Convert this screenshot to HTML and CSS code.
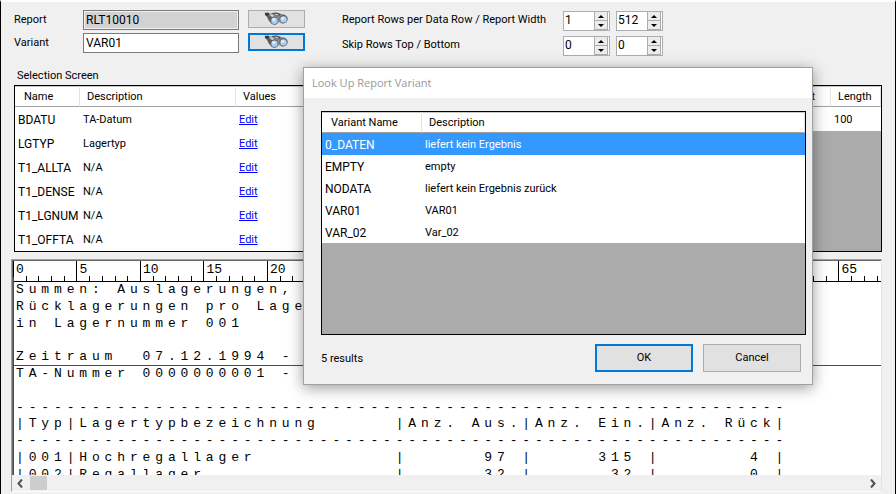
FILE: index.html
```html
<!DOCTYPE html>
<html lang="en">
<head>
<meta charset="utf-8">
<title>Report Variant</title>
<link rel="stylesheet" href="styles.css">
</head>
<body>
<svg class="defs" width="0" height="0" aria-hidden="true">
  <symbol id="binoculars" viewBox="0 0 25 14">
    <path d="M1 1.200 4 .5l2 1 3-.8 4 .3 4 1 3 .2 3.500 3.800-1 4-4 2-4-2-3 2.400-4-.4L5 9z" fill="#969696"/>
    <path d="M.8 .8 4.500 .8 5.500 2.500 3 4.500 1 3z" fill="#3b3b3b"/>
    <path d="M3 4.500 5.500 3 9 6 7 10.500 5 8.500z" fill="#5b5b5b"/>
    <path d="M5.500 2.200 9 3 11 5.500 8.500 5.500z" fill="#dcdcdc"/>
    <path d="M8 1 12.500 .6 17 2 15 4.500 11 3.500z" fill="#4c4c4c"/>
    <path d="M10 1.800 14 2 15 3.600 11.500 3.200z" fill="#c4c4c4"/>
    <circle cx="10.500" cy="8.500" r="4.200" fill="#666"/>
    <circle cx="10.500" cy="8.700" r="3.200" fill="#a9cdf5"/>
    <circle cx="9.700" cy="7.700" r="1.400" fill="#e6f2ff"/>
    <circle cx="19.500" cy="7" r="4.200" fill="#666"/>
    <circle cx="19.500" cy="7.400" r="3.200" fill="#a9cdf5"/>
    <circle cx="18.700" cy="6.400" r="1.400" fill="#e6f2ff"/>
  </symbol>
</svg>

<main class="window">
  <form class="settings">
    <div class="fields">
      <label for="report">Report</label>
      <input class="field" id="report" value="RLT10010" readonly>
      <button type="button" class="lookup" aria-label="Look up report"><svg width="25" height="14"><use href="#binoculars"/></svg></button>
      <label for="variant">Variant</label>
      <input class="field" id="variant" value="VAR01">
      <button type="button" class="lookup active" aria-label="Look up variant"><svg width="25" height="14"><use href="#binoculars"/></svg></button>
    </div>
    <div class="numbers">
      <label for="rows">Report Rows per Data Row / Report Width</label>
      <div class="spin"><input id="rows" value="1"><span class="arrows"><button type="button" class="up" aria-label="Increase"></button><button type="button" class="down" aria-label="Decrease"></button></span></div>
      <div class="spin"><input aria-label="Report Width" value="512"><span class="arrows"><button type="button" class="up" aria-label="Increase"></button><button type="button" class="down" aria-label="Decrease"></button></span></div>
      <label for="skip">Skip Rows Top / Bottom</label>
      <div class="spin"><input id="skip" value="0"><span class="arrows"><button type="button" class="up" aria-label="Increase"></button><button type="button" class="down" aria-label="Decrease"></button></span></div>
      <div class="spin"><input aria-label="Skip Rows Bottom" value="0"><span class="arrows"><button type="button" class="up" aria-label="Increase"></button><button type="button" class="down" aria-label="Decrease"></button></span></div>
    </div>
  </form>

  <h2 class="caption">Selection Screen</h2>
  <div class="grids">
    <div class="grid">
      <table class="selection">
        <colgroup><col class="c-name"><col class="c-desc"><col></colgroup>
        <thead><tr><th>Name</th><th>Description</th><th>Values</th></tr></thead>
        <tbody>
          <tr><td>BDATU</td><td>TA-Datum</td><td><a href="#">Edit</a></td></tr>
          <tr><td>LGTYP</td><td>Lagertyp</td><td><a href="#">Edit</a></td></tr>
          <tr><td>T1_ALLTA</td><td>N/A</td><td><a href="#">Edit</a></td></tr>
          <tr><td>T1_DENSE</td><td>N/A</td><td><a href="#">Edit</a></td></tr>
          <tr><td>T1_LGNUM</td><td>N/A</td><td><a href="#">Edit</a></td></tr>
          <tr><td>T1_OFFTA</td><td>N/A</td><td><a href="#">Edit</a></td></tr>
        </tbody>
      </table>
    </div>
    <div class="grid">
      <table class="columns">
        <colgroup><col><col class="c-length"></colgroup>
        <thead><tr><th class="end">Offset</th><th>Length</th></tr></thead>
        <tbody><tr><td></td><td>100</td></tr></tbody>
      </table>
    </div>
  </div>

  <section class="preview">
    <div class="page">
      <div class="ruler" id="ruler"></div>
      <div class="lines" id="lines"></div>
    </div>
    <div class="scrollbar">
      <svg width="8" height="9" viewBox="0 0 8 9"><path d="M6 .5 2.500 4.500 6 8.500" fill="none" stroke="#505050" stroke-width="2"/></svg>
      <span class="thumb"></span>
      <svg width="8" height="9" viewBox="0 0 8 9"><path d="M2 .5 5.500 4.500 2 8.500" fill="none" stroke="#505050" stroke-width="2"/></svg>
    </div>
  </section>

  <div class="dialog" role="dialog" aria-labelledby="dialog-title">
    <h1 id="dialog-title">Look Up Report Variant</h1>
    <div class="dialog-body">
      <div class="grid results">
        <table>
          <colgroup><col class="c-variant"><col></colgroup>
          <thead><tr><th>Variant Name</th><th>Description</th></tr></thead>
          <tbody>
            <tr class="selected"><td>0_DATEN</td><td>liefert kein Ergebnis</td></tr>
            <tr><td>EMPTY</td><td>empty</td></tr>
            <tr><td>NODATA</td><td>liefert kein Ergebnis zurück</td></tr>
            <tr><td>VAR01</td><td>VAR01</td></tr>
            <tr><td>VAR_02</td><td>Var_02</td></tr>
          </tbody>
        </table>
      </div>
      <div class="actions">
        <span class="count">5 results</span>
        <button type="button" class="action active">OK</button>
        <button type="button" class="action">Cancel</button>
      </div>
    </div>
  </div>
</main>
<script src="report.js"></script>
</body>
</html>
```
FILE: styles.css
```css
* { box-sizing: border-box; }

body {
  margin: 0;
  background: #f0f0f0;
  color: #000;
  font: 11px/16px Roboto, "Liberation Sans", sans-serif;
}

input, button { font: inherit; color: inherit; margin: 0; }
input { font-size: 12px; }
.defs { position: absolute; }

.window {
  position: relative;
  display: flex;
  flex-direction: column;
  height: 100vh;
  padding: 8px 13px 2px 10px;
  border: solid #000;
  border-width: 0 1px;
  border-top: 2px solid #fff;
  overflow: hidden;
}

.settings { display: flex; gap: 37px; padding-left: 3px; }

.fields {
  display: grid;
  grid-template-columns: 60px 156px 57px;
  column-gap: 9px;
  row-gap: 3px;
  align-content: start;
}

.fields label { line-height: 20px; }

.field {
  height: 20px;
  width: 100%;
  padding: 0 2px;
  border: 1px solid #7a7a7a;
  border-radius: 0;
  background: #fff;
}

.field:read-only { background: #d2d2d2; box-shadow: inset 0 0 0 1px #f0f0f0; }

.lookup {
  display: flex;
  justify-content: center;
  align-items: center;
  height: 18px;
  padding: 0;
  border: 1px solid #adadad;
  background: #e1e1e1;
}

.active { border: 2px solid #0078d7; }

.numbers {
  display: grid;
  grid-template-columns: 215px 47px 47px;
  column-gap: 6px;
  row-gap: 5px;
  padding-top: 1px;
}

.numbers label { line-height: 18px; white-space: nowrap; }

.spin {
  display: flex;
  height: 20px;
  border: 1px solid #abadb3;
  background: #fff;
}

.spin input {
  flex: 1;
  min-width: 0;
  padding: 0 1px 2px;
  border: 0;
  background: none;
}

.arrows { display: flex; flex-direction: column; width: 15px; padding-right: 1px; }

.arrows button {
  display: flex;
  flex: 1;
  align-items: center;
  justify-content: center;
  padding: 0;
  border: 1px solid #acacac;
  border-width: 0 1px 1px;
  background: #ececec;
}

.arrows button::before { content: ""; border: 3px solid transparent; }
.arrows .up::before { border-bottom-color: #000; border-top: 0; }
.arrows .down::before { border-top-color: #000; border-bottom: 0; }

.caption { margin: 12px 0 1px 6px; font-size: 11px; font-weight: 400; line-height: 16px; }

.grids { display: flex; gap: 10px; padding-left: 3px; }
.grids .grid { flex: 1; }

.grid { border: 1px solid #000; background: #ababab; }

table { width: 100%; border-collapse: separate; border-spacing: 0; table-layout: fixed; background: #fff; }

th {
  height: 21px;
  padding: 2px 7px 0;
  border-right: 1px solid #e5e5e5;
  border-bottom: 1px solid #a0a0a0;
  box-shadow: inset 0 1px #c8c8c8;
  font-weight: 400;
  line-height: 16px;
  text-align: left;
}

th:first-child { padding-left: 9px; }
th.end { text-align: right; padding-right: 15px; }
td { height: 24px; padding: 2px 3px 0; white-space: nowrap; }
td:first-child { font-size: 12px; }
a { color: #00f; }

.c-name { width: 65px; }
.c-desc { width: 156px; }
.c-length { width: 50px; }
.c-variant { width: 100px; }

.preview {
  display: flex;
  flex: 1;
  flex-direction: column;
  min-height: 0;
  margin-top: 7px;
  border: 1px solid #a0a0a0;
  border-right-color: #e3e3e3;
  border-bottom-color: #fff;
  background: #fff;
}

.page {
  position: relative;
  flex: 1;
  min-height: 0;
  overflow: hidden;
  border-top: 1px solid #696969;
  border-left: 1px solid #696969;
  font: 13px/16px "Liberation Mono", monospace;
}

.page::after {
  content: "";
  position: absolute;
  inset: 16px 0 0 0;
  border-left: 1px solid #f00;
}

.page::before {
  content: "";
  position: absolute;
  inset: 104px 0 auto;
  border-top: 1px solid #f00;
}

.ruler, .lines { display: grid; width: 889px; }

.ruler {
  grid-template-columns: repeat(70, 1fr);
  height: 21px;
  border-bottom: 1px solid #000;
  line-height: 18px;
}

.tick { display: flex; align-items: flex-end; }
.tick::before { content: ""; height: 5px; border-left: 1px solid #000; }
.tick.major { align-items: stretch; }
.tick.major::before { height: auto; }
.tick span { width: 0; padding-left: 2px; overflow: visible; }

.lines { grid-template-rows: repeat(15, 1fr); height: 252px; }
.line { display: grid; grid-template-columns: repeat(70, 1fr); padding-left: 3px; white-space: pre; }

.scrollbar {
  display: flex;
  align-items: center;
  height: 16px;
  padding: 0 4px;
  background: #f0f0f0;
}

.thumb { width: 17px; height: 14px; margin: 0 auto 0 6px; background: #cdcdcd; }

.dialog {
  position: absolute;
  top: 65px;
  left: 302px;
  width: 510px;
  border: 1px solid #a0a0a0;
  background: #f0f0f0;
  box-shadow: 0 3px 14px rgba(0, 0, 0, .4);
}

.dialog h1 {
  margin: 0;
  padding: 0 8px;
  background: #fff;
  color: #999;
  font: 400 11px/30px "Open Sans", sans-serif;
}

.dialog-body { padding: 13px 6px 10px 17px; }
.results { height: 224px; }
.results td { height: 22px; }
.results .selected { background: #39f; color: #fff; }

.actions { display: flex; gap: 10px; padding: 9px 5px 0 0; }
.count { margin-right: auto; line-height: 30px; }

.action {
  width: 98px;
  height: 28px;
  padding: 0;
  border: 1px solid #adadad;
  background: #e1e1e1;
}

.action.active { border: 2px solid #0078d7; }
```
FILE: report.js
```js
const rule = "-".repeat(61);
const text = [
  "Summen: Auslagerungen, Einlagerungen und",
  "Rücklagerungen pro Lagertyp",
  "in Lagernummer 001",
  "",
  "Zeitraum  07.12.1994 -",
  "TA-Nummer 0000000001 -",
  "",
  rule,
  "|Typ|Lagertypbezeichnung      |Anz. Aus.|Anz. Ein.|Anz. Rück|",
  rule,
  "|001|Hochregallager           |      97 |     315 |       4 |",
  "|002|Regallager               |      32 |      32 |       0 |"
];

// One grid cell per report column keeps the text aligned with the ruler.
const lines = document.getElementById("lines");
for (const row of text) {
  const line = document.createElement("div");
  line.className = "line";
  for (const char of row) {
    const cell = document.createElement("span");
    cell.textContent = char;
    line.append(cell);
  }
  lines.append(line);
}

const ruler = document.getElementById("ruler");
for (let i = 0; i < 70; i++) {
  const tick = document.createElement("div");
  tick.className = "tick";
  if (i % 5 === 0) {
    tick.classList.add("major");
    const label = document.createElement("span");
    label.textContent = i;
    tick.append(label);
  }
  ruler.append(tick);
}
```
